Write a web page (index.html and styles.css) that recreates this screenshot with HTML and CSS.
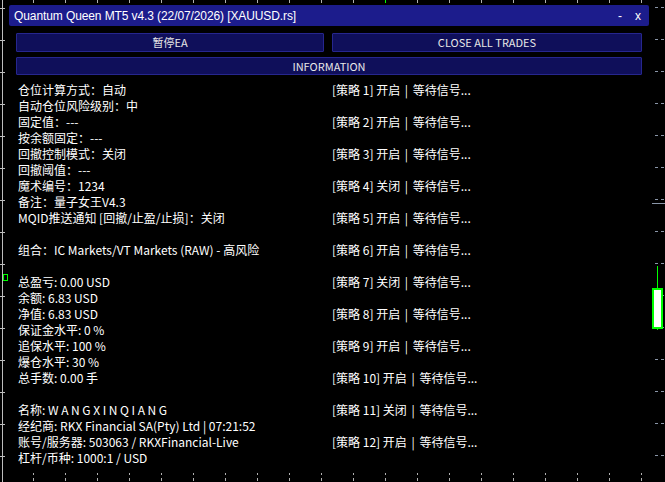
FILE: index.html
```html
<!DOCTYPE html>
<html lang="zh-CN">
<head>
<meta charset="utf-8">
<title>Quantum Queen MT5</title>
<link rel="stylesheet" href="styles.css">
</head>
<body>
<div class="chart" aria-hidden="true">
  <div class="axis-left"></div>
  <div class="ticks-left"></div>
  <div class="ticks-top"></div>
  <div class="tick-green"></div>
  <div class="ticks-bottom"></div>
  <div class="ticks-right"></div>
  <div class="price-line"></div>
  <div class="marker-left"></div>
  <div class="wick"></div>
  <div class="candle"></div>
</div>
<main class="panel">
  <header class="titlebar">
    <span class="title">Quantum Queen MT5 v4.3 (22/07/2026) [XAUUSD.rs]</span>
    <span class="win-ctrls"><span class="ctrl-min">-</span><span class="ctrl-close">x</span></span>
  </header>
  <div class="content">
    <div class="btn-row">
      <button class="btn">暂停EA</button>
      <button class="btn">CLOSE ALL TRADES</button>
    </div>
    <button class="btn btn-wide">INFORMATION</button>
    <div class="cols">
      <div class="info">
        <div class="group">
          <p>仓位计算方式：自动</p>
          <p>自动仓位风险级别：中</p>
          <p>固定值：---</p>
          <p>按余额固定：---</p>
          <p>回撤控制模式：关闭</p>
          <p>回撤阈值：---</p>
          <p>魔术编号：1234</p>
          <p>备注：量子女王V4.3</p>
          <p>MQID推送通知 [回撤/止盈/止损]：关闭</p>
        </div>
        <div class="group">
          <p>组合：IC Markets/VT Markets (RAW) - 高风险</p>
        </div>
        <div class="group">
          <p>总盈亏: 0.00 USD</p>
          <p>余额: 6.83 USD</p>
          <p>净值: 6.83 USD</p>
          <p>保证金水平: 0 %</p>
          <p>追保水平: 100 %</p>
          <p>爆仓水平: 30 %</p>
          <p>总手数: 0.00 手</p>
        </div>
        <div class="group">
          <p>名称: <span class="spaced">WANGXINQIANG</span></p>
          <p>经纪商: RKX Financial SA(Pty) Ltd | 07:21:52</p>
          <p>账号/服务器: 503063 / RKXFinancial-Live</p>
          <p>杠杆/币种: 1000:1 / USD</p>
        </div>
      </div>
      <div class="strats">
        <p>[策略 1] 开启 <span class="sep">|</span> 等待信号...</p>
        <p>[策略 2] 开启 <span class="sep">|</span> 等待信号...</p>
        <p>[策略 3] 开启 <span class="sep">|</span> 等待信号...</p>
        <p>[策略 4] 关闭 <span class="sep">|</span> 等待信号...</p>
        <p>[策略 5] 开启 <span class="sep">|</span> 等待信号...</p>
        <p>[策略 6] 开启 <span class="sep">|</span> 等待信号...</p>
        <p>[策略 7] 关闭 <span class="sep">|</span> 等待信号...</p>
        <p>[策略 8] 开启 <span class="sep">|</span> 等待信号...</p>
        <p>[策略 9] 开启 <span class="sep">|</span> 等待信号...</p>
        <p>[策略 10] 开启 <span class="sep">|</span> 等待信号...</p>
        <p>[策略 11] 关闭 <span class="sep">|</span> 等待信号...</p>
        <p>[策略 12] 开启 <span class="sep">|</span> 等待信号...</p>
      </div>
    </div>
  </div>
</main>
</body>
</html>
```

FILE: styles.css
```css
* { box-sizing: border-box; }
html, body { margin: 0; padding: 0; }
body {
  width: 665px;
  height: 482px;
  overflow: hidden;
  background: #000;
  position: relative;
  font-family: "Noto Sans CJK SC", "Noto Sans", sans-serif;
  color: #fff;
}
p { margin: 0; }

/* chart decorations (free canvas) */
.chart { position: absolute; inset: 0; pointer-events: none; }
.axis-left { position: absolute; left: 2px; top: 0; bottom: 0; width: 1px; background: #bdbdbd; }
.ticks-left {
  position: absolute; left: 0; top: 8px; width: 5px; bottom: 0;
  background: repeating-linear-gradient(to bottom, #bdbdbd 0 1px, transparent 1px 32px);
}
.ticks-top {
  position: absolute; left: 33px; top: 0; right: 0; height: 3px;
  background: repeating-linear-gradient(to right, #b0b0b0 0 1px, transparent 1px 32px);
}
.tick-green { position: absolute; left: 385px; top: 0; width: 1px; height: 3px; background: #00ff00; }
.ticks-bottom {
  position: absolute; left: 33px; top: 473px; right: 0; height: 8px;
  background: repeating-linear-gradient(to right, #b0b0b0 0 1px, transparent 1px 32px);
  -webkit-mask-image: linear-gradient(to bottom, #000 0 2px, transparent 2px 5px, #000 5px 8px);
  mask-image: linear-gradient(to bottom, #000 0 2px, transparent 2px 5px, #000 5px 8px);
}
.ticks-right {
  position: absolute; left: 655px; top: 7px; width: 10px; bottom: 0;
  background: repeating-linear-gradient(to bottom, #8a96a8 0 1px, transparent 1px 32px);
  -webkit-mask-image: linear-gradient(to right, #000 0 3px, transparent 3px 6px, #000 6px 9px, transparent 9px);
  mask-image: linear-gradient(to right, #000 0 3px, transparent 3px 6px, #000 6px 9px, transparent 9px);
}
.price-line { position: absolute; left: 652px; top: 203px; width: 13px; height: 1px; background: #8a96a8; }
.marker-left { position: absolute; left: 3px; top: 274px; width: 5px; height: 7px; border: 1px solid #00ff00; }
.wick { position: absolute; left: 657px; top: 266px; width: 1px; height: 64px; background: #00ff00; }
.candle {
  position: absolute; left: 652px; top: 288px; width: 11px; height: 41px;
  background: #fff; border: 2px solid #00ff00;
}

/* panel */
.panel {
  position: relative;
  margin: 5px 0 0 9px;
  width: 640px;
}
.titlebar {
  height: 21px;
  display: flex;
  align-items: center;
  justify-content: space-between;
  padding: 0 8px 0 5px;
  background: #1c1c8c;
  border-radius: 2px;
  font-family: "Liberation Sans", Arial, sans-serif;
  font-size: 12px;
  color: #fff;
}
.title { letter-spacing: -0.1px; }
.win-ctrls { display: flex; gap: 13px; align-items: center; }
.ctrl-min, .ctrl-close { line-height: 1; }

.content { padding: 7px 7px 0 7px; }
.btn-row {
  display: grid;
  grid-template-columns: 308px 310px;
  gap: 8px;
}
.btn {
  display: flex;
  align-items: center;
  justify-content: center;
  height: 19px;
  margin: 0;
  padding: 0;
  background: #0f0f5a;
  border: 1px solid #26268e;
  border-radius: 1px;
  color: #e8e8e8;
  font-family: "Noto Sans CJK SC", "Noto Sans", sans-serif;
  font-size: 11px;
  line-height: 1;
}
.btn-wide {
  width: 626px;
  height: 18px;
  margin-top: 5px;
}

.cols {
  display: grid;
  grid-template-columns: 308px 310px;
  gap: 8px;
  margin-top: 7px;
  font-size: 12px;
  line-height: 16px;
}
.info {
  padding-left: 2px;
  display: flex;
  flex-direction: column;
  gap: 16px;
}
.group p { white-space: nowrap; }
.spaced { letter-spacing: 2.6px; }
.strats {
  display: flex;
  flex-direction: column;
  gap: 16px;
}
.strats p { white-space: nowrap; }
.sep { margin: 0 2px; }
```
